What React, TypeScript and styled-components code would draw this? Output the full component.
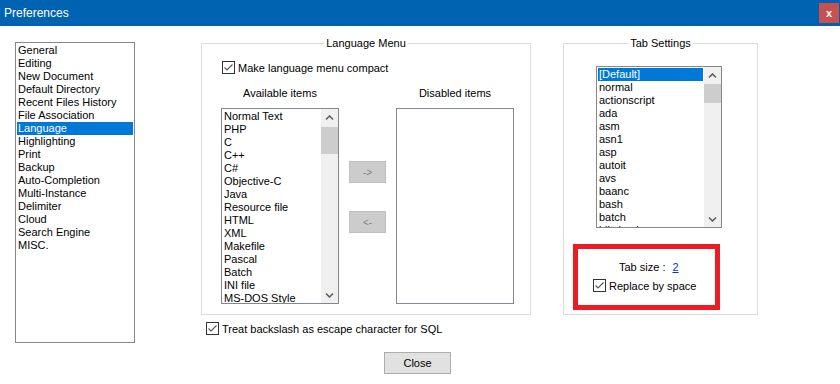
import React from 'react';
import styled, { createGlobalStyle } from 'styled-components';

const GlobalStyle = createGlobalStyle`
  html, body {
    margin: 0;
    padding: 0;
    background: #fff;
  }

  body {
    font-family: "Liberation Sans", Arial, sans-serif;
    font-size: 11px;
    color: #000;
  }
`;

const Window = styled.div`
  width: 840px;
  height: 384px;
  display: flex;
  flex-direction: column;
  background: #fff;
  overflow: hidden;
`;

const TitleBar = styled.div`
  height: 26px;
  flex: none;
  background: #0063b1;
  color: #fff;
  display: flex;
  align-items: flex-start;
  justify-content: space-between;
  padding-left: 4px;
  font-size: 12px;
`;

const TitleText = styled.span`
  line-height: 26px;
`;

const CloseX = styled.div`
  width: 20px;
  height: 20px;
  margin-top: 3px;
  margin-right: 1px;
  background: #c75050;
  color: #fff;
  font-weight: bold;
  font-size: 11px;
  display: flex;
  align-items: center;
  justify-content: center;
`;

const Main = styled.div`
  display: flex;
  align-items: flex-start;
  padding: 11px 0 0 15px;
`;

const ListBox = styled.div<{ $w: number; $h: number; $mt?: number; $ml?: number }>`
  box-sizing: border-box;
  width: ${p => p.$w}px;
  height: ${p => p.$h}px;
  margin-top: ${p => p.$mt ?? 0}px;
  margin-left: ${p => p.$ml ?? 0}px;
  flex: none;
  border: 1px solid #828790;
  background: #fff;
  display: flex;
  overflow: hidden;
`;

const Items = styled.ul`
  list-style: none;
  margin: 0;
  padding: 1px;
  flex: 1;
  min-width: 0;
  overflow: hidden;
`;

const Item = styled.li<{ $selected?: boolean }>`
  height: 13px;
  line-height: 13px;
  padding-left: 1px;
  white-space: nowrap;
  background: ${p => (p.$selected ? '#0078d7' : 'transparent')};
  color: ${p => (p.$selected ? '#fff' : '#000')};
`;

const ScrollBar = styled.div`
  width: 17px;
  flex: none;
  background: #f0f0f0;
  display: flex;
  flex-direction: column;
`;

const ScrollArrow = styled.div`
  height: 17px;
  flex: none;
  display: flex;
  align-items: center;
  justify-content: center;
`;

const Track = styled.div`
  flex: 1;
`;

const Thumb = styled.div<{ $top: number; $h: number }>`
  margin-top: ${p => p.$top}px;
  height: ${p => p.$h}px;
  background: #cdcdcd;
`;

const Group = styled.fieldset<{ $w: number; $ml?: number }>`
  box-sizing: border-box;
  width: ${p => p.$w}px;
  height: 278px;
  margin: 0 0 0 ${p => p.$ml ?? 0}px;
  padding: 0;
  min-width: 0;
  border: 1px solid #dcdcdc;
  display: block;
`;

const GroupTitle = styled.legend`
  margin: 0 auto;
  padding: 0 2px;
  line-height: 13px;
  font-size: 11px;
`;

const Column = styled.div<{ $ml?: number }>`
  display: flex;
  flex-direction: column;
  margin-left: ${p => p.$ml ?? 0}px;
`;

const CheckRow = styled.label<{ $mt: number; $ml: number }>`
  display: flex;
  align-items: center;
  gap: 3px;
  height: 15px;
  margin-top: ${p => p.$mt}px;
  margin-left: ${p => p.$ml}px;
  white-space: nowrap;
`;

const ListsRow = styled.div`
  display: flex;
  align-items: flex-start;
  margin-top: 12px;
  margin-left: 19px;
`;

const ListColumn = styled.div`
  width: 118px;
  display: flex;
  flex-direction: column;
  align-items: center;
`;

const ListLabel = styled.div`
  line-height: 13px;
  margin-bottom: 8px;
`;

const ButtonStack = styled.div`
  width: 57px;
  margin-top: 74px;
  display: flex;
  flex-direction: column;
  align-items: center;
  gap: 28px;
`;

const MoveButton = styled.button`
  box-sizing: border-box;
  width: 37px;
  height: 22px;
  padding: 0;
  background: #cccccc;
  border: 1px solid #bfbfbf;
  color: #838383;
  font-family: "Liberation Sans", Arial, sans-serif;
  font-size: 10px;
`;

const Highlight = styled.div`
  box-sizing: border-box;
  width: 147px;
  height: 66px;
  margin: 16px 0 0 9px;
  border: 5px solid #ed1c24;
  padding-top: 12px;
`;

const TabSizeRow = styled.div`
  display: flex;
  line-height: 13px;
  padding-left: 41px;
`;

const TabSizeLink = styled.a`
  margin-left: 7px;
  color: #0033dd;
  text-decoration: underline;
`;

const Footer = styled.div`
  padding: 9px 0 0 384px;
`;

const CloseButton = styled.button`
  box-sizing: border-box;
  width: 67px;
  height: 22px;
  padding: 0;
  background: #e1e1e1;
  border: 1px solid #adadad;
  color: #000;
  font-family: "Liberation Sans", Arial, sans-serif;
  font-size: 11px;
`;

const Check = () => (
  <svg width="13" height="13" viewBox="0 0 13 13">
    <rect x="0.5" y="0.5" width="12" height="12" fill="#fff" stroke="#333" />
    <path d="M2.5 6.5 L5 9 L10.5 3.5" fill="none" stroke="#555" strokeWidth="1.1" />
  </svg>
);

const Chevron = ({ down }: { down?: boolean }) => (
  <svg width="9" height="6" viewBox="0 0 9 6">
    <path
      d={down ? 'M1 1.5 L4.5 5 L8 1.5' : 'M1 4.5 L4.5 1 L8 4.5'}
      fill="none"
      stroke="#606060"
      strokeWidth="1.6"
    />
  </svg>
);

const Scroll = ({ top, h }: { top: number; h: number }) => (
  <ScrollBar>
    <ScrollArrow>
      <Chevron />
    </ScrollArrow>
    <Track>
      <Thumb $top={top} $h={h} />
    </Track>
    <ScrollArrow>
      <Chevron down />
    </ScrollArrow>
  </ScrollBar>
);

const categories = [
  'General', 'Editing', 'New Document', 'Default Directory', 'Recent Files History',
  'File Association', 'Language', 'Highlighting', 'Print', 'Backup', 'Auto-Completion',
  'Multi-Instance', 'Delimiter', 'Cloud', 'Search Engine', 'MISC.',
];

const languages = [
  'Normal Text', 'PHP', 'C', 'C++', 'C#', 'Objective-C', 'Java', 'Resource file',
  'HTML', 'XML', 'Makefile', 'Pascal', 'Batch', 'INI file', 'MS-DOS Style',
];

const tabLangs = [
  '[Default]', 'normal', 'actionscript', 'ada', 'asm', 'asn1', 'asp', 'autoit',
  'avs', 'baanc', 'bash', 'batch', 'blitzbasic',
];

const App: React.FC = () => {
  return (
    <Window>
      <GlobalStyle />
      <TitleBar>
        <TitleText>Preferences</TitleText>
        <CloseX>x</CloseX>
      </TitleBar>

      <Main>
        <ListBox $w={120} $h={301} $mt={5}>
          <Items>
            {categories.map(c => (
              <Item key={c} $selected={c === 'Language'}>{c}</Item>
            ))}
          </Items>
        </ListBox>

        <Column $ml={66}>
          <Group $w={330}>
            <GroupTitle>Language Menu</GroupTitle>
            <CheckRow $mt={10} $ml={20}>
              <Check />
              Make language menu compact
            </CheckRow>

            <ListsRow>
              <ListColumn>
                <ListLabel>Available items</ListLabel>
                <ListBox $w={118} $h={196}>
                  <Items>
                    {languages.map(l => (
                      <Item key={l}>{l}</Item>
                    ))}
                  </Items>
                  <Scroll top={1} h={27} />
                </ListBox>
              </ListColumn>

              <ButtonStack>
                <MoveButton disabled>-&gt;</MoveButton>
                <MoveButton disabled>&lt;-</MoveButton>
              </ButtonStack>

              <ListColumn>
                <ListLabel>Disabled items</ListLabel>
                <ListBox $w={118} $h={196} />
              </ListColumn>
            </ListsRow>
          </Group>

          <CheckRow $mt={6} $ml={5}>
            <Check />
            Treat backslash as escape character for SQL
          </CheckRow>
        </Column>

        <Group $w={195} $ml={32}>
          <GroupTitle>Tab Settings</GroupTitle>
          <ListBox $w={126} $h={162} $mt={16} $ml={32}>
            <Items>
              {tabLangs.map(t => (
                <Item key={t} $selected={t === '[Default]'}>{t}</Item>
              ))}
            </Items>
            <Scroll top={0} h={19} />
          </ListBox>

          <Highlight>
            <TabSizeRow>
              Tab size :
              <TabSizeLink>2</TabSizeLink>
            </TabSizeRow>
            <CheckRow $mt={4} $ml={15}>
              <Check />
              Replace by space
            </CheckRow>
          </Highlight>
        </Group>
      </Main>

      <Footer>
        <CloseButton>Close</CloseButton>
      </Footer>
    </Window>
  );
};

export default App;
